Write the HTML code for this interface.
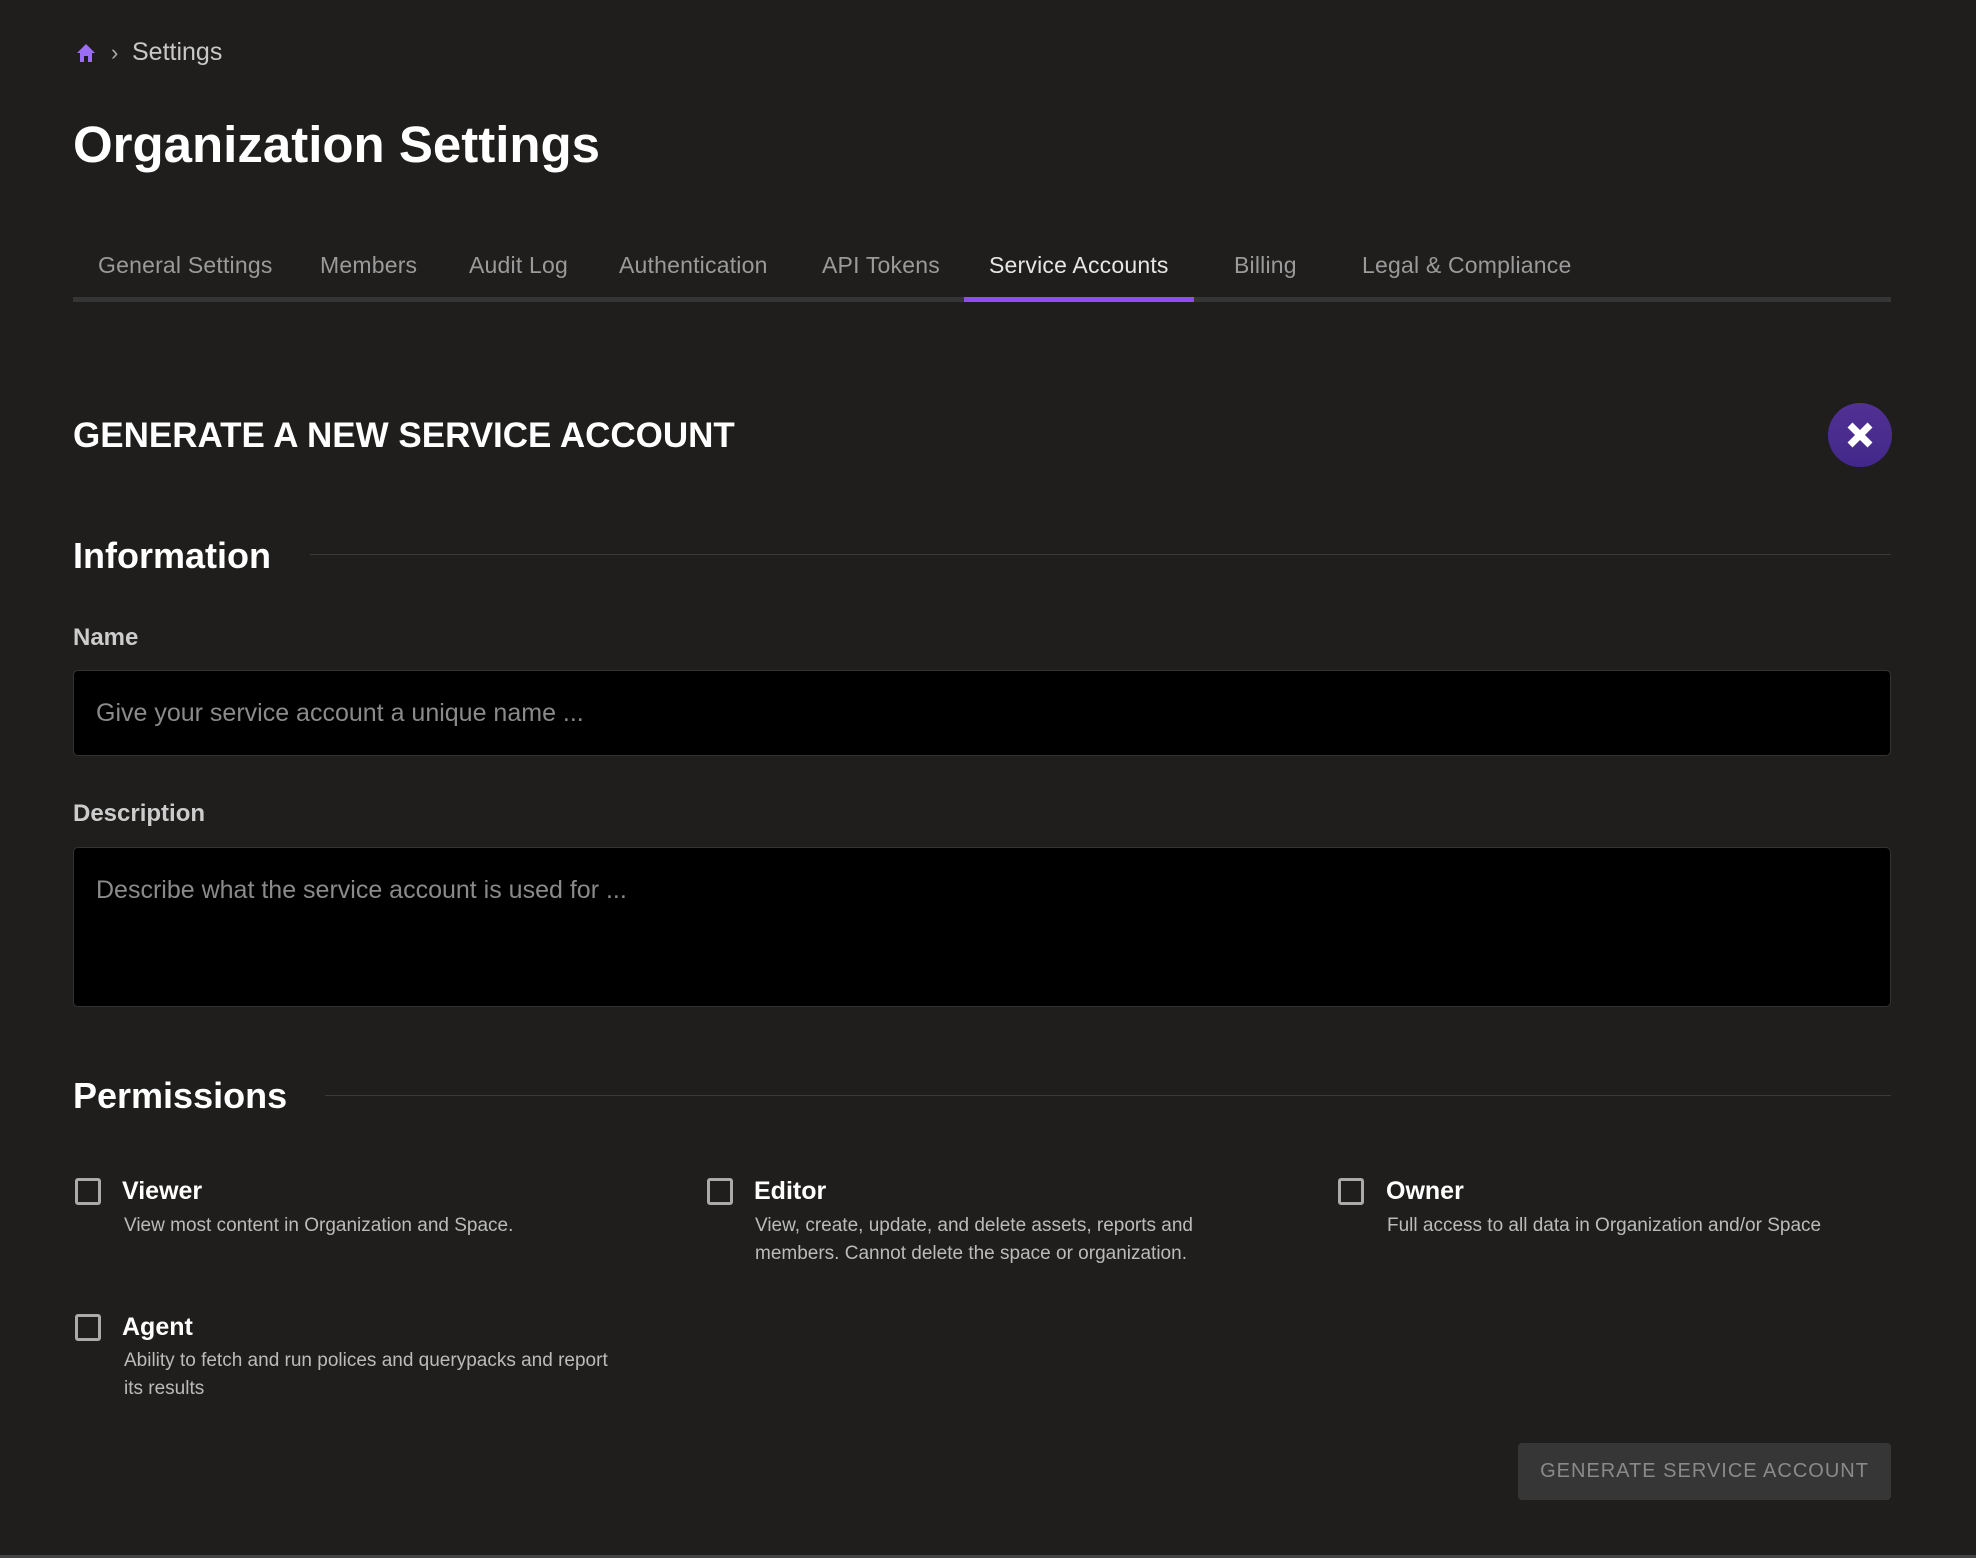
<!DOCTYPE html>
<html><head><meta charset="utf-8"><style>
*{margin:0;padding:0;box-sizing:border-box}
body{width:1976px;height:1558px;background:#1f1e1d;font-family:"Liberation Sans",sans-serif;position:relative;overflow:hidden;color:#fff}
.a{position:absolute;white-space:nowrap}
.tab{position:absolute;top:252px;font-size:23px;color:#9a9a9a;letter-spacing:0.2px}
.lbl{font-size:24px;font-weight:bold;color:#ccc}
.inp{position:absolute;left:73px;width:1818px;background:#000;border:1px solid #333;border-radius:5px}
.ph{position:absolute;left:22px;font-size:25px;color:#8a8a8a}
.cb{position:absolute;width:26px;height:27px;border:3px solid #aaa;border-radius:3px}
.pl{position:absolute;font-size:25px;font-weight:bold;color:#fff}
.pd{position:absolute;font-size:19px;color:#bbb;line-height:28px;white-space:nowrap}
</style></head><body>
<svg class="a" style="left:76px;top:43px" width="20" height="20" viewBox="0 0 20 20"><path d="M10 1 L19 10 L16 10 L16 19 L12 19 L12 13 L8 13 L8 19 L4 19 L4 10 L1 10 Z" fill="#9b6cf5"/></svg>
<div class="a" style="left:111px;top:40px;font-size:22px;color:#aaa">›</div>
<div class="a" style="left:132px;top:38px;font-size:25px;color:#c8c8c8">Settings</div>
<div class="a" style="left:73px;top:115px;font-size:51px;font-weight:bold;color:#fff">Organization Settings</div>
<div class="tab" style="left:98px">General Settings</div>
<div class="tab" style="left:320px">Members</div>
<div class="tab" style="left:469px">Audit Log</div>
<div class="tab" style="left:619px">Authentication</div>
<div class="tab" style="left:822px">API Tokens</div>
<div class="tab" style="left:989px;color:#e6e6e6">Service Accounts</div>
<div class="tab" style="left:1234px">Billing</div>
<div class="tab" style="left:1362px">Legal &amp; Compliance</div>
<div class="a" style="left:73px;top:297px;width:1818px;height:5px;background:#353535"></div>
<div class="a" style="left:964px;top:297px;width:230px;height:5px;background:#8b4ef0"></div>
<div class="a" style="left:73px;top:416px;font-size:35px;font-weight:bold;color:#fff">GENERATE A NEW SERVICE ACCOUNT</div>
<div class="a" style="left:1828px;top:403px;width:64px;height:64px;border-radius:50%;background:linear-gradient(#513193,#42288a)"></div>
<svg class="a" style="left:1845px;top:420px" width="30" height="30" viewBox="0 0 30 30"><path d="M5 5 L25 25 M25 5 L5 25" stroke="#fff" stroke-width="7"/></svg>
<div class="a" style="left:73px;top:535px;font-size:36px;font-weight:bold">Information</div>
<div class="a" style="left:310px;top:554px;width:1581px;height:1px;background:#3a3a3a"></div>
<div class="a lbl" style="left:73px;top:624px">Name</div>
<div class="inp" style="top:670px;height:86px"><div class="ph" style="top:28px">Give your service account a unique name ...</div></div>
<div class="a lbl" style="left:73px;top:800px">Description</div>
<div class="inp" style="top:847px;height:160px"><div class="ph" style="top:28px">Describe what the service account is used for ...</div></div>
<div class="a" style="left:73px;top:1075px;font-size:36px;font-weight:bold">Permissions</div>
<div class="a" style="left:325px;top:1095px;width:1566px;height:1px;background:#3a3a3a"></div>
<div class="cb" style="left:75px;top:1178px"></div>
<div class="pl" style="left:122px;top:1177px">Viewer</div>
<div class="pd" style="left:124px;top:1212px">View most content in Organization and Space.</div>
<div class="cb" style="left:707px;top:1178px"></div>
<div class="pl" style="left:754px;top:1177px">Editor</div>
<div class="pd" style="left:755px;top:1212px">View, create, update, and delete assets, reports and<br>members. Cannot delete the space or organization.</div>
<div class="cb" style="left:1338px;top:1178px"></div>
<div class="pl" style="left:1386px;top:1177px">Owner</div>
<div class="pd" style="left:1387px;top:1212px">Full access to all data in Organization and/or Space</div>
<div class="cb" style="left:75px;top:1314px"></div>
<div class="pl" style="left:122px;top:1313px">Agent</div>
<div class="pd" style="left:124px;top:1347px">Ability to fetch and run polices and querypacks and report<br>its results</div>
<div class="a" style="left:1518px;top:1443px;width:373px;height:57px;background:#363636;border-radius:4px;color:#8a8a8a;font-size:20px;letter-spacing:1px;text-align:center;line-height:57px">GENERATE SERVICE ACCOUNT</div>
<div class="a" style="left:0;top:1555px;width:1976px;height:3px;background:#444"></div>
</body></html>
